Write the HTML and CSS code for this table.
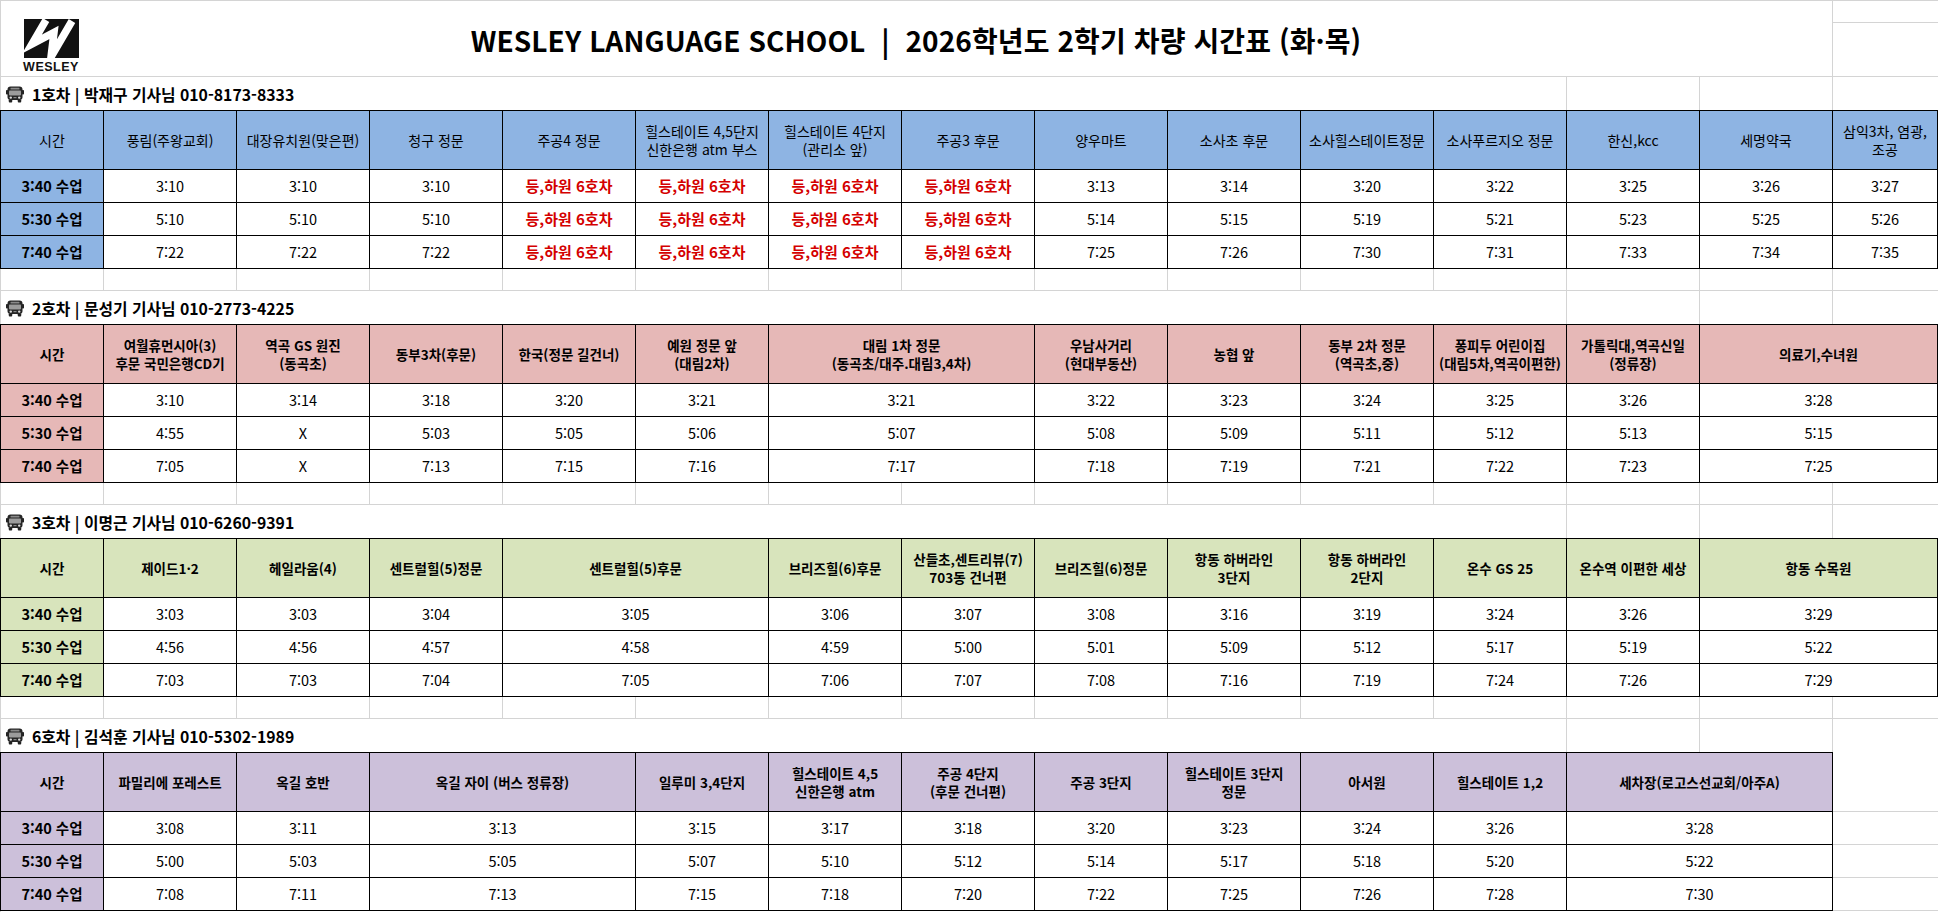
FILE: index.html
```html
<!DOCTYPE html>
<html lang="ko">
<head>
<meta charset="utf-8">
<title>WESLEY 차량 시간표</title>
<link rel="stylesheet" href="styles.css">
</head>
<body>
<div class="sheet">

  <div class="title-row">
    <div class="title-cell">
      <div class="logo">
        <svg class="logo-mark" width="55" height="39" viewBox="0 0 55 39">
          <defs><clipPath id="sq"><rect x="0" y="0" width="55" height="39"/></clipPath></defs>
          <rect x="0" y="0" width="55" height="39" fill="#111"/>
          <g clip-path="url(#sq)">
            <polyline points="22,1 8,25 30,13.5 27,38 48,2" fill="none" stroke="#fff" stroke-width="7.5" stroke-linejoin="miter" stroke-miterlimit="6"/>
          </g>
        </svg>
        <span class="logo-word">WESLEY</span>
      </div>
      <div class="title-text">WESLEY LANGUAGE SCHOOL  |  2026학년도 2학기 차량 시간표 (화·목)</div>
      <div></div>
    </div>
    <div class="title-side">
      <div class="side-a"></div>
      <div class="side-b"></div>
    </div>
  </div>

  <!-- 1호차 -->
  <div class="label-row">
    <div class="label-main">
      <svg class="bus" width="18" height="17" viewBox="0 0 18 17"><rect x="0" y="4" width="2.2" height="4.5" rx="0.8" fill="#222"/><rect x="15.8" y="4" width="2.2" height="4.5" rx="0.8" fill="#222"/><rect x="1.5" y="0.5" width="15" height="13.5" rx="3" fill="#262626"/><rect x="4.5" y="1.8" width="9" height="1.7" rx="0.6" fill="#8a8a8a"/><rect x="3" y="4.4" width="12" height="5" rx="0.8" fill="#9c9c9c"/><circle cx="4.8" cy="11.6" r="1.2" fill="#dcdcdc"/><circle cx="13.2" cy="11.6" r="1.2" fill="#dcdcdc"/><rect x="7.5" y="11" width="3" height="1.2" fill="#8a8a8a"/><rect x="2.8" y="13.5" width="3.4" height="3" rx="0.8" fill="#222"/><rect x="11.8" y="13.5" width="3.4" height="3" rx="0.8" fill="#222"/></svg>
      <span>1호차 | 박재구 기사님 010-8173-8333</span>
    </div>
    <div class="label-cell"></div><div class="label-cell"></div><div class="label-cell last"></div>
  </div>
  <div class="tt s1">
    <div class="c h first">시간</div>
    <div class="c h">풍림(주왕교회)</div>
    <div class="c h">대장유치원(맞은편)</div>
    <div class="c h">청구 정문</div>
    <div class="c h">주공4 정문</div>
    <div class="c h">힐스테이트 4,5단지<br>신한은행 atm 부스</div>
    <div class="c h">힐스테이트 4단지<br>(관리소 앞)</div>
    <div class="c h">주공3 후문</div>
    <div class="c h">양우마트</div>
    <div class="c h">소사초 후문</div>
    <div class="c h">소사힐스테이트정문</div>
    <div class="c h">소사푸르지오 정문</div>
    <div class="c h">한신,kcc</div>
    <div class="c h">세명약국</div>
    <div class="c h">삼익3차, 염광,<br>조공</div>

    <div class="c t first">3:40 수업</div>
    <div class="c">3:10</div><div class="c">3:10</div><div class="c">3:10</div>
    <div class="c red">등,하원 6호차</div><div class="c red">등,하원 6호차</div><div class="c red">등,하원 6호차</div><div class="c red">등,하원 6호차</div>
    <div class="c">3:13</div><div class="c">3:14</div><div class="c">3:20</div><div class="c">3:22</div><div class="c">3:25</div><div class="c">3:26</div><div class="c">3:27</div>

    <div class="c t first">5:30 수업</div>
    <div class="c">5:10</div><div class="c">5:10</div><div class="c">5:10</div>
    <div class="c red">등,하원 6호차</div><div class="c red">등,하원 6호차</div><div class="c red">등,하원 6호차</div><div class="c red">등,하원 6호차</div>
    <div class="c">5:14</div><div class="c">5:15</div><div class="c">5:19</div><div class="c">5:21</div><div class="c">5:23</div><div class="c">5:25</div><div class="c">5:26</div>

    <div class="c t first">7:40 수업</div>
    <div class="c">7:22</div><div class="c">7:22</div><div class="c">7:22</div>
    <div class="c red">등,하원 6호차</div><div class="c red">등,하원 6호차</div><div class="c red">등,하원 6호차</div><div class="c red">등,하원 6호차</div>
    <div class="c">7:25</div><div class="c">7:26</div><div class="c">7:30</div><div class="c">7:31</div><div class="c">7:33</div><div class="c">7:34</div><div class="c">7:35</div>
  </div>
  <div class="spacer">
    <div class="g"></div><div class="g"></div><div class="g"></div><div class="g"></div><div class="g"></div><div class="g"></div><div class="g"></div><div class="g"></div><div class="g"></div><div class="g"></div><div class="g"></div><div class="g"></div><div class="g"></div><div class="g"></div><div class="g"></div>
  </div>

  <!-- 2호차 -->
  <div class="label-row">
    <div class="label-main">
      <svg class="bus" width="18" height="17" viewBox="0 0 18 17"><rect x="0" y="4" width="2.2" height="4.5" rx="0.8" fill="#222"/><rect x="15.8" y="4" width="2.2" height="4.5" rx="0.8" fill="#222"/><rect x="1.5" y="0.5" width="15" height="13.5" rx="3" fill="#262626"/><rect x="4.5" y="1.8" width="9" height="1.7" rx="0.6" fill="#8a8a8a"/><rect x="3" y="4.4" width="12" height="5" rx="0.8" fill="#9c9c9c"/><circle cx="4.8" cy="11.6" r="1.2" fill="#dcdcdc"/><circle cx="13.2" cy="11.6" r="1.2" fill="#dcdcdc"/><rect x="7.5" y="11" width="3" height="1.2" fill="#8a8a8a"/><rect x="2.8" y="13.5" width="3.4" height="3" rx="0.8" fill="#222"/><rect x="11.8" y="13.5" width="3.4" height="3" rx="0.8" fill="#222"/></svg>
      <span>2호차 | 문성기 기사님 010-2773-4225</span>
    </div>
    <div class="label-cell"></div><div class="label-cell"></div><div class="label-cell last"></div>
  </div>
  <div class="tt s2">
    <div class="c h first">시간</div>
    <div class="c h">여월휴먼시아(3)<br>후문 국민은행CD기</div>
    <div class="c h">역곡 GS 원진<br>(동곡초)</div>
    <div class="c h">동부3차(후문)</div>
    <div class="c h">한국(정문 길건너)</div>
    <div class="c h">예원 정문 앞<br>(대림2차)</div>
    <div class="c h sp2">대림 1차 정문<br>(동곡초/대주.대림3,4차)</div>
    <div class="c h">우남사거리<br>(현대부동산)</div>
    <div class="c h">농협 앞</div>
    <div class="c h">동부 2차 정문<br>(역곡초,중)</div>
    <div class="c h">퐁피두 어린이집<br>(대림5차,역곡이편한)</div>
    <div class="c h">가톨릭대,역곡신일<br>(정류장)</div>
    <div class="c h sp2">의료기,수녀원</div>

    <div class="c t first">3:40 수업</div>
    <div class="c">3:10</div><div class="c">3:14</div><div class="c">3:18</div><div class="c">3:20</div><div class="c">3:21</div><div class="c sp2">3:21</div><div class="c">3:22</div><div class="c">3:23</div><div class="c">3:24</div><div class="c">3:25</div><div class="c">3:26</div><div class="c sp2">3:28</div>

    <div class="c t first">5:30 수업</div>
    <div class="c">4:55</div><div class="c">X</div><div class="c">5:03</div><div class="c">5:05</div><div class="c">5:06</div><div class="c sp2">5:07</div><div class="c">5:08</div><div class="c">5:09</div><div class="c">5:11</div><div class="c">5:12</div><div class="c">5:13</div><div class="c sp2">5:15</div>

    <div class="c t first">7:40 수업</div>
    <div class="c">7:05</div><div class="c">X</div><div class="c">7:13</div><div class="c">7:15</div><div class="c">7:16</div><div class="c sp2">7:17</div><div class="c">7:18</div><div class="c">7:19</div><div class="c">7:21</div><div class="c">7:22</div><div class="c">7:23</div><div class="c sp2">7:25</div>
  </div>
  <div class="spacer">
    <div class="g"></div><div class="g"></div><div class="g"></div><div class="g"></div><div class="g"></div><div class="g"></div><div class="g"></div><div class="g"></div><div class="g"></div><div class="g"></div><div class="g"></div><div class="g"></div><div class="g"></div><div class="g"></div><div class="g"></div>
  </div>

  <!-- 3호차 -->
  <div class="label-row">
    <div class="label-main">
      <svg class="bus" width="18" height="17" viewBox="0 0 18 17"><rect x="0" y="4" width="2.2" height="4.5" rx="0.8" fill="#222"/><rect x="15.8" y="4" width="2.2" height="4.5" rx="0.8" fill="#222"/><rect x="1.5" y="0.5" width="15" height="13.5" rx="3" fill="#262626"/><rect x="4.5" y="1.8" width="9" height="1.7" rx="0.6" fill="#8a8a8a"/><rect x="3" y="4.4" width="12" height="5" rx="0.8" fill="#9c9c9c"/><circle cx="4.8" cy="11.6" r="1.2" fill="#dcdcdc"/><circle cx="13.2" cy="11.6" r="1.2" fill="#dcdcdc"/><rect x="7.5" y="11" width="3" height="1.2" fill="#8a8a8a"/><rect x="2.8" y="13.5" width="3.4" height="3" rx="0.8" fill="#222"/><rect x="11.8" y="13.5" width="3.4" height="3" rx="0.8" fill="#222"/></svg>
      <span>3호차 | 이명근 기사님 010-6260-9391</span>
    </div>
    <div class="label-cell"></div><div class="label-cell"></div><div class="label-cell last"></div>
  </div>
  <div class="tt s3">
    <div class="c h first">시간</div>
    <div class="c h">제이드1·2</div>
    <div class="c h">헤일라움(4)</div>
    <div class="c h">센트럴힐(5)정문</div>
    <div class="c h sp2">센트럴힐(5)후문</div>
    <div class="c h">브리즈힐(6)후문</div>
    <div class="c h">산들초,센트리뷰(7)<br>703동 건너편</div>
    <div class="c h">브리즈힐(6)정문</div>
    <div class="c h">항동 하버라인<br>3단지</div>
    <div class="c h">항동 하버라인<br>2단지</div>
    <div class="c h">온수 GS 25</div>
    <div class="c h">온수역 이편한 세상</div>
    <div class="c h sp2">항동 수목원</div>

    <div class="c t first">3:40 수업</div>
    <div class="c">3:03</div><div class="c">3:03</div><div class="c">3:04</div><div class="c sp2">3:05</div><div class="c">3:06</div><div class="c">3:07</div><div class="c">3:08</div><div class="c">3:16</div><div class="c">3:19</div><div class="c">3:24</div><div class="c">3:26</div><div class="c sp2">3:29</div>

    <div class="c t first">5:30 수업</div>
    <div class="c">4:56</div><div class="c">4:56</div><div class="c">4:57</div><div class="c sp2">4:58</div><div class="c">4:59</div><div class="c">5:00</div><div class="c">5:01</div><div class="c">5:09</div><div class="c">5:12</div><div class="c">5:17</div><div class="c">5:19</div><div class="c sp2">5:22</div>

    <div class="c t first">7:40 수업</div>
    <div class="c">7:03</div><div class="c">7:03</div><div class="c">7:04</div><div class="c sp2">7:05</div><div class="c">7:06</div><div class="c">7:07</div><div class="c">7:08</div><div class="c">7:16</div><div class="c">7:19</div><div class="c">7:24</div><div class="c">7:26</div><div class="c sp2">7:29</div>
  </div>
  <div class="spacer">
    <div class="g"></div><div class="g"></div><div class="g"></div><div class="g"></div><div class="g"></div><div class="g"></div><div class="g"></div><div class="g"></div><div class="g"></div><div class="g"></div><div class="g"></div><div class="g"></div><div class="g"></div><div class="g"></div><div class="g"></div>
  </div>

  <!-- 6호차 -->
  <div class="label-row">
    <div class="label-main">
      <svg class="bus" width="18" height="17" viewBox="0 0 18 17"><rect x="0" y="4" width="2.2" height="4.5" rx="0.8" fill="#222"/><rect x="15.8" y="4" width="2.2" height="4.5" rx="0.8" fill="#222"/><rect x="1.5" y="0.5" width="15" height="13.5" rx="3" fill="#262626"/><rect x="4.5" y="1.8" width="9" height="1.7" rx="0.6" fill="#8a8a8a"/><rect x="3" y="4.4" width="12" height="5" rx="0.8" fill="#9c9c9c"/><circle cx="4.8" cy="11.6" r="1.2" fill="#dcdcdc"/><circle cx="13.2" cy="11.6" r="1.2" fill="#dcdcdc"/><rect x="7.5" y="11" width="3" height="1.2" fill="#8a8a8a"/><rect x="2.8" y="13.5" width="3.4" height="3" rx="0.8" fill="#222"/><rect x="11.8" y="13.5" width="3.4" height="3" rx="0.8" fill="#222"/></svg>
      <span>6호차 | 김석훈 기사님 010-5302-1989</span>
    </div>
    <div class="label-cell"></div><div class="label-cell"></div><div class="label-cell last"></div>
  </div>
  <div class="tt s4">
    <div class="c h first">시간</div>
    <div class="c h">파밀리에 포레스트</div>
    <div class="c h">옥길 호반</div>
    <div class="c h sp2">옥길 자이 (버스 정류장)</div>
    <div class="c h">일루미 3,4단지</div>
    <div class="c h">힐스테이트 4,5<br>신한은행 atm</div>
    <div class="c h">주공 4단지<br>(후문 건너편)</div>
    <div class="c h">주공 3단지</div>
    <div class="c h">힐스테이트 3단지<br>정문</div>
    <div class="c h">아서원</div>
    <div class="c h">힐스테이트 1,2</div>
    <div class="c h sp2">세차장(로고스선교회/아주A)</div>
    <div class="c blank blank-h"></div>

    <div class="c t first">3:40 수업</div>
    <div class="c">3:08</div><div class="c">3:11</div><div class="c sp2">3:13</div><div class="c">3:15</div><div class="c">3:17</div><div class="c">3:18</div><div class="c">3:20</div><div class="c">3:23</div><div class="c">3:24</div><div class="c">3:26</div><div class="c sp2">3:28</div><div class="c blank"></div>

    <div class="c t first">5:30 수업</div>
    <div class="c">5:00</div><div class="c">5:03</div><div class="c sp2">5:05</div><div class="c">5:07</div><div class="c">5:10</div><div class="c">5:12</div><div class="c">5:14</div><div class="c">5:17</div><div class="c">5:18</div><div class="c">5:20</div><div class="c sp2">5:22</div><div class="c blank"></div>

    <div class="c t first">7:40 수업</div>
    <div class="c">7:08</div><div class="c">7:11</div><div class="c sp2">7:13</div><div class="c">7:15</div><div class="c">7:18</div><div class="c">7:20</div><div class="c">7:22</div><div class="c">7:25</div><div class="c">7:26</div><div class="c">7:28</div><div class="c sp2">7:30</div><div class="c blank"></div>
  </div>

</div>
</body>
</html>
```

FILE: styles.css
```css
* {
  box-sizing: border-box;
}

html, body {
  margin: 0;
  padding: 0;
  background: #ffffff;
}

body {
  font-family: "Noto Sans CJK KR", "Noto Sans", sans-serif;
  color: #000000;
}

.sheet {
  width: 1938px;
  height: 912px;
  overflow: hidden;
  box-shadow: inset 1px 0 0 #d4d4d4;
}

/* ---------- title ---------- */
.title-row {
  display: grid;
  grid-template-columns: 1833px 105px;
  height: 77px;
  border-top: 1px solid #d4d4d4;
}

.title-cell {
  display: grid;
  grid-template-columns: 1fr auto 1fr;
  align-items: center;
  border-right: 1px solid #d4d4d4;
  border-bottom: 1px solid #d4d4d4;
}

.logo {
  justify-self: start;
  align-self: start;
  margin-left: 23px;
  margin-top: 18px;
  width: 56px;
  display: flex;
  flex-direction: column;
  align-items: center;
}

.logo-mark {
  display: block;
}

.logo-word {
  font-family: "Liberation Sans", Arial, sans-serif;
  font-weight: 700;
  font-size: 12.5px;
  line-height: 12px;
  letter-spacing: 0.5px;
  margin-top: 3px;
  color: #111;
}

.title-text {
  font-size: 28px;
  font-weight: 700;
  white-space: pre;
  padding-top: 3px;
  letter-spacing: 0.1px;
}

.title-side {
  display: flex;
  flex-direction: column;
}

.side-a {
  height: 22px;
  border-bottom: 1px solid #d4d4d4;
}

.side-b {
  flex: 1;
  border-bottom: 1px solid #d4d4d4;
}

/* ---------- section label ---------- */
.label-row {
  display: grid;
  grid-template-columns: 1567px 133px 133px 105px;
  height: 33px;
}

.label-main {
  display: flex;
  align-items: center;
  gap: 8px;
  padding-left: 6px;
  padding-top: 1px;
  font-size: 15.8px;
  font-weight: 700;
  border-right: 1px solid #d4d4d4;
}

.bus {
  display: block;
  flex: none;
}

.label-cell {
  border-right: 1px solid #d4d4d4;
}

.label-cell.last {
  border-right: none;
}

/* ---------- timetable ---------- */
.tt {
  display: grid;
  grid-template-columns: 104px repeat(13, 133px) 105px;
  grid-template-rows: 60px 33px 33px 33px;
}

.c {
  display: flex;
  align-items: center;
  justify-content: center;
  text-align: center;
  border-right: 1px solid #000000;
  border-bottom: 1px solid #000000;
  font-size: 14.5px;
  line-height: 18px;
  white-space: nowrap;
}

.c.first {
  border-left: 1px solid #000000;
}

.c.h {
  border-top: 1px solid #000000;
  font-size: 13.5px;
  font-weight: 700;
  line-height: 18px;
}

.s1 .c.h {
  font-weight: 400;
  font-size: 14px;
}

.c.t {
  font-weight: 700;
}

.c.red {
  color: #d40000;
  font-weight: 700;
  font-size: 15px;
}

.sp2 {
  grid-column: span 2;
}

.c.blank {
  border-right: none;
  border-bottom-color: #d4d4d4;
  background: #ffffff;
}

.c.blank-h {
  border-top-color: #d4d4d4;
}

.s1 .h, .s1 .t { background: #8eb4e3; }
.s2 .h, .s2 .t { background: #e6b8b7; }
.s3 .h, .s3 .t { background: #d8e4bc; }
.s4 .h, .s4 .t { background: #ccc0da; }

.s4 .c.blank { background: #ffffff; }

/* ---------- spacer rows ---------- */
.spacer {
  display: grid;
  grid-template-columns: 104px repeat(13, 133px) 105px;
  height: 22px;
}

.g {
  border-right: 1px solid #d4d4d4;
  border-bottom: 1px solid #d4d4d4;
}

.g:first-child {
  border-left: 1px solid #d4d4d4;
}

.g:last-child {
  border-right: none;
}
```
